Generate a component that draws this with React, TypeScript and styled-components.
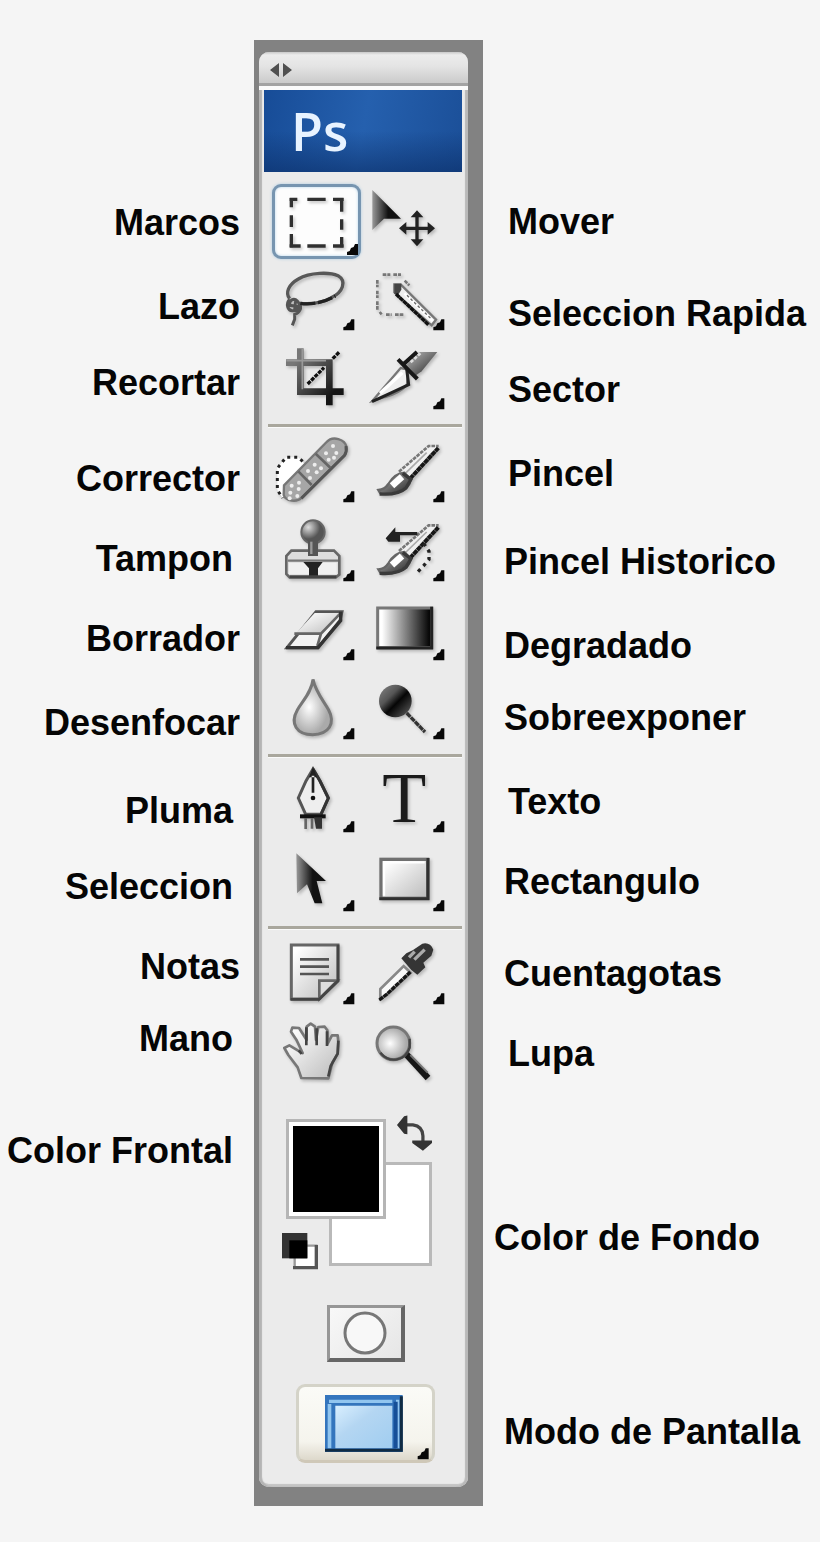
import React from "react";
import styled, { createGlobalStyle } from "styled-components";

const GlobalStyle = createGlobalStyle`
  *, *::before, *::after { box-sizing: border-box; }
  body {
    margin: 0;
    background: #f5f5f5;
    color: #050505;
    font-family: "Arial Rounded MT Bold", "Liberation Sans", Arial, sans-serif;
  }
  button {
    margin: 0;
    padding: 0;
    border: 0;
    background: none;
    cursor: pointer;
  }
`;

const Page = styled.main`
  display: grid;
  grid-template-columns: minmax(254px, 254fr) 229px minmax(337px, 337fr);
  align-items: start;
  padding: 40px 0 36px;
`;

const LabelColumn = styled.div<{ $side: "left" | "right" }>`
  display: flex;
  flex-direction: column;
  align-items: ${(p) => (p.$side === "left" ? "flex-end" : "flex-start")};
  padding-top: ${(p) => (p.$side === "left" ? 163 : 162)}px;
`;

const indents = { small: 11, edge: 14, medium: 21, large: 25 };
type Indent = keyof typeof indents;

const ToolLabel = styled.label<{ $gap: number; $side: "left" | "right"; $indent: Indent }>`
  margin-top: ${(p) => p.$gap}px;
  padding-${(p) => (p.$side === "left" ? "right" : "left")}: ${(p) => indents[p.$indent]}px;
  font-size: 36px;
  font-weight: 700;
  line-height: 40px;
  white-space: nowrap;
`;

const Dock = styled.section`
  padding: 12px 15px 19px 5px;
  background: #828282;
`;

const Palette = styled.div`
  overflow: hidden;
  padding: 0 6px 24px 5px;
  border-radius: 10px;
  background: #ebebeb;
  box-shadow: inset 3px 0 1px #b4b4b4, inset -3px 0 1px #b9b9b9, inset 0 -3px 1px #c4c4c4;
`;

const Grip = styled.header`
  display: flex;
  align-items: center;
  height: 38px;
  margin: 0 -6px 0 -5px;
  padding: 2px 11px 0;
  border-bottom: 4px solid #fbfbfb;
  background: linear-gradient(#c9c9c9 0, #ececec 3px, #e4e4e4 14px, #cbcbcb 31px, #a3a3a3 31px);
`;

const Brand = styled.div`
  height: 82px;
  padding-left: 27px;
  background:
    linear-gradient(#0a2d6600 50%, #0a2d6699),
    linear-gradient(100deg, #174c97, #2560ae 50%, #1b4f98);
  color: #e8f3ff;
  font-family: "Open Sans", "Noto Sans", sans-serif;
  font-size: 52px;
  font-weight: 600;
  line-height: 82px;
`;

const Tools = styled.div`
  padding: 5px 0 0;
`;

const ToolGroup = styled.div`
  display: grid;
  grid-template-columns: 90px 90px;
  margin-left: 4px;
  padding-left: 1px;

  &:not(:last-child) {
    padding-bottom: 13px;
    border-bottom: 1px solid #fafafa;
    background: linear-gradient(#a9a79d, #a9a79d) bottom / 100% 3px no-repeat;
  }
`;

const ToolButton = styled.button<{ $selected?: boolean }>`
  position: relative;
  height: 79px;

  &::before {
    content: "";
    display: ${(p) => (p.$selected ? "block" : "none")};
    position: absolute;
    inset: 7px -2px -3px 3px;
    border: 3px solid #7795b0;
    border-radius: 9px;
    background: #fdfdfd;
    box-shadow: 0 0 3px #a9c9e0, inset 0 0 3px #b3d3ea;
  }
`;

const Art = styled.svg`
  position: relative;
  display: block;
  width: 100%;
  height: 100%;
  overflow: visible;
`;

const Shaded = styled.g`
  filter: drop-shadow(5px 6px 4px #00000038);
`;

const Lower = styled.div`
  display: flex;
  flex-direction: column;
  align-items: center;
  padding: 27px 0 0 5px;
`;

const ColorWell = styled.div`
  display: grid;
  grid-template-columns: 4px 43px 57px 11px 35px;
  grid-template-rows: 4px 43px 57px 14px 33px 4px;
  align-self: flex-start;
  margin: 0 0 35px 13px;
`;

const BackSwatch = styled.button`
  grid-area: 3 / 3 / 6 / 6;
  border: 3px solid #b9b9b9;
  background: #fff;
`;

const FrontSwatch = styled.button`
  grid-area: 2 / 2 / 4 / 4;
  border: 3px solid #b5b5b5;
  background: #000;
  box-shadow: inset 0 0 0 4px #fff;
`;

const SwapButton = styled.button`
  grid-area: 1 / 5 / 3 / 6;
  height: 37px;
`;

const ResetButton = styled.button`
  grid-area: 5 / 1 / 7 / 3;
  width: 37px;
`;

const MaskButton = styled.button`
  width: 78px;
  height: 57px;
  margin-bottom: 22px;
  border: solid;
  border-width: 3px 4px 4px 3px;
  border-color: #969696 #666 #666 #969696;
  background: linear-gradient(135deg, #f8f8f8, #e6e6e6);
`;

const ScreenButton = styled.button`
  width: 139px;
  height: 79px;
  border: 3px solid #d4d3c8;
  border-bottom-color: #cfc8b8;
  border-radius: 9px;
  background: linear-gradient(#fbfbf7, #f5f4ed 75%, #ddd8cb);
`;

const HiddenDefs = styled.svg`
  position: absolute;
`;

const ink = "#222";

const Defs = () => (
  <HiddenDefs width="0" height="0" aria-hidden="true">
    <defs>
      <linearGradient id="darkPointer"><stop offset="0" stopColor="#999" /><stop offset=".55" stopColor="#111" /></linearGradient>
      <linearGradient id="ramp"><stop offset=".08" stopColor="#fff" /><stop offset=".95" stopColor="#080808" /></linearGradient>
      <linearGradient id="paper" x2="1" y2="1"><stop offset=".1" stopColor="#fff" /><stop offset="1" stopColor="#bbb" /></linearGradient>
      <linearGradient id="metal" x2="1" y2="1"><stop offset="0" stopColor="#bbb" /><stop offset=".45" stopColor="#777" /><stop offset="1" stopColor="#222" /></linearGradient>
      <linearGradient id="frame" x2="1" y2="1"><stop offset=".2" stopColor="#777" /><stop offset=".8" stopColor="#151515" /></linearGradient>
      <linearGradient id="sky" x2="1" y2="1"><stop offset="0" stopColor="#d9efff" /><stop offset=".4" stopColor="#b4d6f2" /><stop offset="1" stopColor="#a0cdf0" /></linearGradient>
      <radialGradient id="drop" cx=".4" cy=".5"><stop offset="0" stopColor="#fff" /><stop offset="1" stopColor="#aaa" /></radialGradient>
      <radialGradient id="knob" cx=".3" cy=".3"><stop offset="0" stopColor="#ddd" /><stop offset="1" stopColor="#555" /></radialGradient>
      <linearGradient id="lollipop" x2="1" y2="1"><stop offset="0" stopColor="#888" /><stop offset=".35" stopColor="#555" /><stop offset=".55" stopColor="#050505" /><stop offset="1" stopColor="#666" /></linearGradient>
    </defs>
  </HiddenDefs>
);

const Marquee = () => (
  <g fill="none" stroke="#303030" strokeWidth="10">
    <path d="M119 64H142M172 64H227M249 64H281M119 204H152M172 204H227M249 204H281" />
    <path d="M124 60V88M124 112V147M124 168V208M275 60V101M275 124V155M275 177V208" />
  </g>
);

const Move = () => (
  <>
    <path d="M367 36L453 122H402L367 156Z" fill="url(#darkPointer)" />
    <path d="M459 151H544M501 108V194" stroke={ink} strokeWidth="10" />
    <path d="M501 97L520 118H482ZM501 205L520 184H482ZM447 151L469 132V170ZM555 151L533 132V170Z" fill={ink} />
  </>
);

const Lasso = () => (
  <g fill="none" stroke="#585858" strokeWidth="10">
    <path d="M119 362C105 345 115 320 145 303C180 282 240 282 264 293C292 310 277 343 246 358C219 374 185 379 151 376" />
    <path d="M119 364C107 376 112 400 129 398C145 401 154 381 142 369C132 359 116 366 119 382L149 386M137 366L134 396M148 374C157 390 149 405 134 409V424L127 442" stroke="#555" strokeWidth="9" />
    <path d="M151 376C190 382 228 370 256 354" stroke="#222" strokeDasharray="45 8" />
  </g>
);

const QuickSelect = () => (
  <>
    <path d="M398 290H421M430 290H453M464 308L478 322M382 306V328M382 338V360M382 370V396M389 402L395 409M408 410H425M435 410H460" fill="none" stroke="#777" strokeWidth="8" strokeDasharray="11 3" />
    <path d="M433 319H452L558 425L545 442L433 343Z" fill="#eee" stroke="#777" strokeWidth="7" />
    <path d="M433 317H454V335L446 348H433Z" fill="#444" />
    <path d="M438 348L535 440" stroke="#111" strokeWidth="10" strokeDasharray="14 1" />
    <path d="M463 346L548 429" stroke="#fff" strokeWidth="8" />
    <path d="M471 352L546 425" stroke="#666" strokeWidth="4" strokeDasharray="8 7" />
  </>
);

const Crop = () => (
  <>
    <path d="M151 511V641H281M108 554H238V682" fill="none" stroke="url(#frame)" strokeWidth="20" />
    <path d="M157 512V634M109 548H228" stroke="#999" strokeWidth="5" />
    <path d="M173 618L222 569M248 542L269 521" stroke="#111" strokeWidth="10" strokeDasharray="12 3" />
  </>
);

const Slice = () => (
  <>
    <path d="M367 669L452 570L475 575L471 620Q448 646 405 657Z" fill="#eee" stroke="#777" strokeWidth="7" />
    <path d="M366 671Q430 642 476 620L470 574" fill="none" stroke={ink} strokeWidth="9" />
    <path d="M470 560L508 522H562L515 580L498 592Z" fill="url(#metal)" />
    <path d="M444 544L502 603M461 558L501 522" stroke="#171717" strokeWidth="12" />
    <path d="M482 553L515 522" stroke="#ddd" strokeWidth="8" strokeDasharray="10 5" />
    <path d="M390 646L457 584" stroke="#fff" strokeWidth="10" />
  </>
);

const dots = [[121, 218], [146, 207], [147, 188], [125, 197], [119, 235], [142, 228], [174, 153], [194, 134], [200, 157], [180, 174], [213, 145], [228, 100], [249, 78], [259, 99], [236, 119], [252, 113]];
const Healing = () => (
  <>
    <path d="M158 124L145 112H108L82 145V210L98 234L185 165Z" fill="#fff" />
    <path d="M158 124L145 112H108L82 145V210L98 234" fill="none" stroke="#222" strokeWidth="9" strokeDasharray="9 12" />
    <path d="M102 196L229 67C248 45 286 58 289 81Q292 94 283 106L154 234C142 247 107 245 101 225Z" fill="#a6a6a6" stroke="#777" strokeWidth="7" />
    <path d="M154 235L284 106Q291 94 288 78" fill="none" stroke="#555" strokeWidth="9" />
    <path d="M145 154L185 195M197 101L241 143" stroke="#666" strokeWidth="8" />
    {dots.map(([x, y]) => <circle key={`${x}-${y}`} cx={x} cy={y} r="6" fill="#ededed" />)}
  </>
);

const BrushShape = () => (
  <>
    <path d="M449 156L536 76H568L480 182L466 179Z" fill="#f0f0f0" />
    <path d="M447 155L536 78H566" fill="none" stroke="#777" strokeWidth="8" strokeDasharray="11 3" />
    <path d="M480 176L565 84" stroke="#171717" strokeWidth="12" strokeDasharray="15 1" />
    <path d="M462 164L530 98" stroke="#aaa" strokeWidth="5" />
    <path d="M385 210Q404 209 415 192Q434 160 463 158L482 178Q480 202 451 214Q425 226 391 220Z" fill="url(#metal)" stroke="#666" strokeWidth="7" />
    <path d="M426 197L456 170" stroke="#fff" strokeWidth="20" />
    <path d="M389 222Q444 226 468 204L483 178L458 160" fill="none" stroke="#3a3a3a" strokeWidth="10" />
  </>
);

const HistoryBrush = () => (
  <>
    <g transform="translate(0 238)"><BrushShape /></g>
    <path d="M407 355L436 322V336H502V346H450V365H415Z" fill="#222" />
    <path d="M521 370L537 394V418L521 437L501 458" fill="none" stroke="#222" strokeWidth="10" strokeDasharray="10 13" />
  </>
);

const Stamp = () => (
  <>
    <path d="M124 392H252L268 408V464L257 472H119L109 462V408Z" fill="#ddd" stroke="#666" strokeWidth="8" />
    <circle cx="189" cy="336" r="35" fill="url(#knob)" stroke="#666" strokeWidth="6" />
    <path d="M189 362V408" stroke="#555" strokeWidth="30" />
    <path d="M184 365V402" stroke="#999" strokeWidth="7" />
    <path d="M113 422H264" stroke="#777" strokeWidth="7" />
    <path d="M117 428H260V463H117Z" fill="#f0f0f0" />
    <path d="M160 426H218L204 445V469H177V445Z" fill="#222" />
    <path d="M119 470H259" stroke="#444" strokeWidth="9" />
  </>
);

const Eraser = () => (
  <>
    <path d="M111 173L198 65H276L270 91L204 173Z" fill="#f3f3f3" stroke="#555" strokeWidth="9" />
    <path d="M137 131L194 69H271L213 131Z" fill="url(#paper)" />
    <path d="M133 131H213L274 67M213 131L202 168" fill="none" stroke="#666" strokeWidth="8" />
    <path d="M108 173H204L272 92V65" fill="none" stroke="#333" strokeWidth="10" />
  </>
);

const Gradient = () => (
  <>
    <rect x="383" y="54" width="162" height="119" fill="url(#ramp)" stroke="#777" strokeWidth="9" />
    <path d="M379 174H545V50" fill="none" stroke="#222" strokeWidth="9" />
  </>
);

const Blur = () => (
  <path d="M189 268C185 306 157 334 142 360C119 401 140 434 188 434C237 433 257 400 236 360C221 333 197 306 189 268Z" fill="url(#drop)" stroke="#777" strokeWidth="9" />
);

const Dodge = () => (
  <>
    <circle cx="436" cy="333" r="49" fill="url(#lollipop)" />
    <path d="M470 369L525 426" stroke="#333" strokeWidth="10" strokeDasharray="16 2" />
  </>
);

const Pen = () => (
  <>
    <path d="M189 57L168 93L145 144L167 193H213L235 144L210 93Z" fill="#eee" stroke="#555" strokeWidth="9" />
    <path d="M189 57L210 93L235 144L213 193" fill="none" stroke="#333" strokeWidth="9" />
    <path d="M189 50L177 82H201ZM185 77H193V128H185Z" fill="#222" />
    <circle cx="189" cy="144" r="7" fill="#111" />
    <path d="M150 199H227" stroke="#111" strokeWidth="12" />
    <path d="M167 204V237M186 204V236" stroke="#666" strokeWidth="8" />
    <path d="M192 202H216V236H198Z" fill="#333" />
  </>
);

const Type = () => (
  <text x="463" y="216" textAnchor="middle" fill="#1b1b1b" fontFamily="Liberation Serif, serif" fontSize="216">T</text>
);

const PathSelect = () => (
  <path d="M139 310L228 393H200L217 460H194L171 403L141 430Z" fill="url(#darkPointer)" />
);

const RectangleTool = () => (
  <>
    <rect x="393" y="328" width="140" height="117" fill="url(#paper)" stroke="#707070" strokeWidth="10" />
    <path d="M388 446H534V324" fill="none" stroke="#303030" strokeWidth="9" />
    <path d="M402 437V337H524" fill="none" stroke="#fff" strokeWidth="7" />
  </>
);

const Notes = () => (
  <>
    <path d="M124 75H264V183L208 237H124Z" fill="url(#paper)" stroke="#666" strokeWidth="9" />
    <path d="M208 236V182H262Z" fill="#ddd" stroke="#666" strokeWidth="8" />
    <path d="M264 74V182L207 238H122" fill="none" stroke="#444" strokeWidth="8" />
    <path d="M150 118H237M150 140H237M150 162H237" stroke="#555" strokeWidth="8" />
  </>
);

const Eyedropper = () => (
  <>
    <path d="M391 207L461 138L482 158L411 225L391 236Z" fill="#f9f9f9" stroke="#888" strokeWidth="8" />
    <path d="M388 240L411 222L481 156" fill="none" stroke="#151515" strokeWidth="10" strokeDasharray="14 2" />
    <path d="M454 115L469 100L488 91L517 71Q540 65 550 89L544 107L520 128L526 142L502 164L484 150Z" fill="#353535" />
    <path d="M477 112L494 95M493 119L524 89" stroke="#aaa" strokeWidth="10" />
  </>
);

const Hand = () => (
  <>
    <path d="M154 474L143 442L115 405L103 384L118 376L143 391L158 399L139 359L123 335L127 323L147 324L170 360V320L182 311L195 320L198 360L205 321L224 320L232 331L233 371L246 346L263 346L265 366L263 401L247 428L235 475Z" fill="url(#paper)" stroke="#777" strokeWidth="8" strokeLinejoin="round" />
    <path d="M169 322V376M200 325V376M231 334V378M146 391L155 402M265 362L263 401L242 438L235 469" fill="none" stroke="#444" strokeWidth="8" />
  </>
);

const Zoom = () => (
  <>
    <path d="M468 402L534 474" stroke="#171717" strokeWidth="19" />
    <path d="M481 405L533 458" stroke="#777" strokeWidth="6" />
    <circle cx="430" cy="370" r="49" fill="url(#drop)" stroke="#777" strokeWidth="9" />
    <path d="M391 398C419 431 466 424 479 383V356" fill="none" stroke="#444" strokeWidth="7" />
  </>
);

type Tool = { id: string; art: React.FC; origin: string; menu?: boolean; selected?: boolean };

const groups: Tool[][] = [
  [
    { id: "marcos", art: Marquee, origin: "57 -3", menu: true, selected: true },
    { id: "mover", art: Move, origin: "327 -3" },
    { id: "lazo", art: Lasso, origin: "57 234", menu: true },
    { id: "seleccion-rapida", art: QuickSelect, origin: "327 234", menu: true },
    { id: "recortar", art: Crop, origin: "57 471" },
    { id: "sector", art: Slice, origin: "327 471", menu: true },
  ],
  [
    { id: "corrector", art: Healing, origin: "57 24", menu: true },
    { id: "pincel", art: BrushShape, origin: "327 24", menu: true },
    { id: "tampon", art: Stamp, origin: "57 261", menu: true },
    { id: "pincel-historico", art: HistoryBrush, origin: "327 261", menu: true },
    { id: "borrador", art: Eraser, origin: "57 -12", menu: true },
    { id: "degradado", art: Gradient, origin: "327 -12", menu: true },
    { id: "desenfocar", art: Blur, origin: "57 225", menu: true },
    { id: "sobreexponer", art: Dodge, origin: "327 225", menu: true },
  ],
  [
    { id: "pluma", art: Pen, origin: "57 24", menu: true },
    { id: "texto", art: Type, origin: "327 24", menu: true },
    { id: "seleccion", art: PathSelect, origin: "57 261", menu: true },
    { id: "rectangulo", art: RectangleTool, origin: "327 261", menu: true },
  ],
  [
    { id: "notas", art: Notes, origin: "57 30", menu: true },
    { id: "cuentagotas", art: Eyedropper, origin: "327 30", menu: true },
    { id: "mano", art: Hand, origin: "57 267" },
    { id: "lupa", art: Zoom, origin: "327 267" },
  ],
];

type LabelData = { text: string; id: string; gap: number; indent: Indent };

const leftLabels: LabelData[] = [
  { text: "Marcos", id: "marcos", gap: 0, indent: "edge" },
  { text: "Lazo", id: "lazo", gap: 44, indent: "edge" },
  { text: "Recortar", id: "recortar", gap: 36, indent: "edge" },
  { text: "Corrector", id: "corrector", gap: 56, indent: "edge" },
  { text: "Tampon", id: "tampon", gap: 40, indent: "medium" },
  { text: "Borrador", id: "borrador", gap: 40, indent: "edge" },
  { text: "Desenfocar", id: "desenfocar", gap: 44, indent: "edge" },
  { text: "Pluma", id: "pluma", gap: 48, indent: "medium" },
  { text: "Seleccion", id: "seleccion", gap: 36, indent: "medium" },
  { text: "Notas", id: "notas", gap: 40, indent: "edge" },
  { text: "Mano", id: "mano", gap: 32, indent: "medium" },
  { text: "Color Frontal", id: "color-frontal", gap: 72, indent: "medium" },
];

const rightLabels: LabelData[] = [
  { text: "Mover", id: "mover", gap: 0, indent: "large" },
  { text: "Seleccion Rapida", id: "seleccion-rapida", gap: 52, indent: "large" },
  { text: "Sector", id: "sector", gap: 36, indent: "large" },
  { text: "Pincel", id: "pincel", gap: 44, indent: "large" },
  { text: "Pincel Historico", id: "pincel-historico", gap: 48, indent: "medium" },
  { text: "Degradado", id: "degradado", gap: 44, indent: "medium" },
  { text: "Sobreexponer", id: "sobreexponer", gap: 32, indent: "medium" },
  { text: "Texto", id: "texto", gap: 44, indent: "large" },
  { text: "Rectangulo", id: "rectangulo", gap: 40, indent: "medium" },
  { text: "Cuentagotas", id: "cuentagotas", gap: 52, indent: "medium" },
  { text: "Lupa", id: "lupa", gap: 40, indent: "large" },
  { text: "Color de Fondo", id: "color-fondo", gap: 144, indent: "small" },
  { text: "Modo de Pantalla", id: "modo-pantalla", gap: 154, indent: "medium" },
];

const Labels = ({ side, items }: { side: "left" | "right"; items: LabelData[] }) => (
  <LabelColumn $side={side}>
    {items.map((l) => (
      <ToolLabel key={l.id} htmlFor={l.id} $gap={l.gap} $side={side} $indent={l.indent}>
        {l.text}
      </ToolLabel>
    ))}
  </LabelColumn>
);

const MenuCorner = ({ x, y }: { x: number; y: number }) => (
  <path transform={`translate(${x} ${y})`} d="M0 33V24L8 21L12 12L20 9L24 0H33V33Z" fill="#080808" />
);

const ToolItem = ({ tool }: { tool: Tool }) => {
  const Drawing = tool.art;
  const [x, y] = tool.origin.split(" ").map(Number);
  const shift = tool.selected ? 11 : 0;
  return (
    <ToolButton id={tool.id} type="button" $selected={tool.selected} aria-pressed={!!tool.selected}>
      <Art viewBox={`${x} ${y} 270 237`} aria-hidden="true">
        <Shaded><Drawing /></Shaded>
        {tool.menu && <MenuCorner x={x + 223 + shift} y={y + 190 + shift} />}
      </Art>
    </ToolButton>
  );
};

export default function App() {
  return (
    <>
      <GlobalStyle />
      <Defs />
      <Page>
        <Labels side="left" items={leftLabels} />
        <Dock>
          <Palette>
            <Grip>
              <svg width="22" height="14" viewBox="0 0 22 14" aria-hidden="true">
                <path d="M9 0V14L0 7ZM13 0V14L22 7Z" fill="#505050" />
              </svg>
            </Grip>
            <Brand>Ps</Brand>
            <Tools>
              {groups.map((group) => (
                <ToolGroup key={group[0].id}>
                  {group.map((tool) => <ToolItem key={tool.id} tool={tool} />)}
                </ToolGroup>
              ))}
            </Tools>
            <Lower>
              <ColorWell>
                <BackSwatch id="color-fondo" type="button" />
                <FrontSwatch id="color-frontal" type="button" />
                <SwapButton type="button" aria-label="Intercambiar colores">
                  <Art viewBox="441 45 108 111" aria-hidden="true">
                    <path d="M462 74H490Q520 78 521 108V130" fill="none" stroke="#444" strokeWidth="10" />
                    <path d="M441 74L463 47L473 45V103L463 101ZM521 154L549 130V122H488V130Z" fill="#333" />
                  </Art>
                </SwapButton>
                <ResetButton type="button" aria-label="Colores predeterminados">
                  <Art viewBox="97 400 111 111" aria-hidden="true">
                    <path d="M135 438H200V504H135Z" fill="#fff" stroke="#999" strokeWidth="7" />
                    <path d="M130 504H200V436" fill="none" stroke="#555" strokeWidth="10" />
                    <path d="M97 400H173V476H97Z" fill="#333" />
                    <path d="M119 422H173V476H119Z" fill="#000" />
                  </Art>
                </ResetButton>
              </ColorWell>
              <MaskButton type="button" aria-label="Modo de máscara rápida">
                <Art viewBox="0 0 71 50" aria-hidden="true">
                  <circle cx="35" cy="25" r="20" fill="#f8f8f8" stroke="#777" strokeWidth="3" />
                </Art>
              </MaskButton>
              <ScreenButton id="modo-pantalla" type="button">
                <Art viewBox="150 306 399 219" aria-hidden="true">
                  <path d="M228 330H461V501H228Z" fill="#3475bd" />
                  <path d="M240 344H430V354H240ZM236 357H247V490H236ZM441 344H451V490H441Z" fill="#91c5ef" />
                  <path d="M434 350H446V490H434Z" fill="#164f98" />
                  <path d="M259 362H430V490H259Z" fill="url(#sky)" />
                  <path d="M228 496H457V334" fill="none" stroke="#102b43" strokeWidth="9" />
                  <MenuCorner x={506} y={490} />
                </Art>
              </ScreenButton>
            </Lower>
          </Palette>
        </Dock>
        <Labels side="right" items={rightLabels} />
      </Page>
    </>
  );
}
